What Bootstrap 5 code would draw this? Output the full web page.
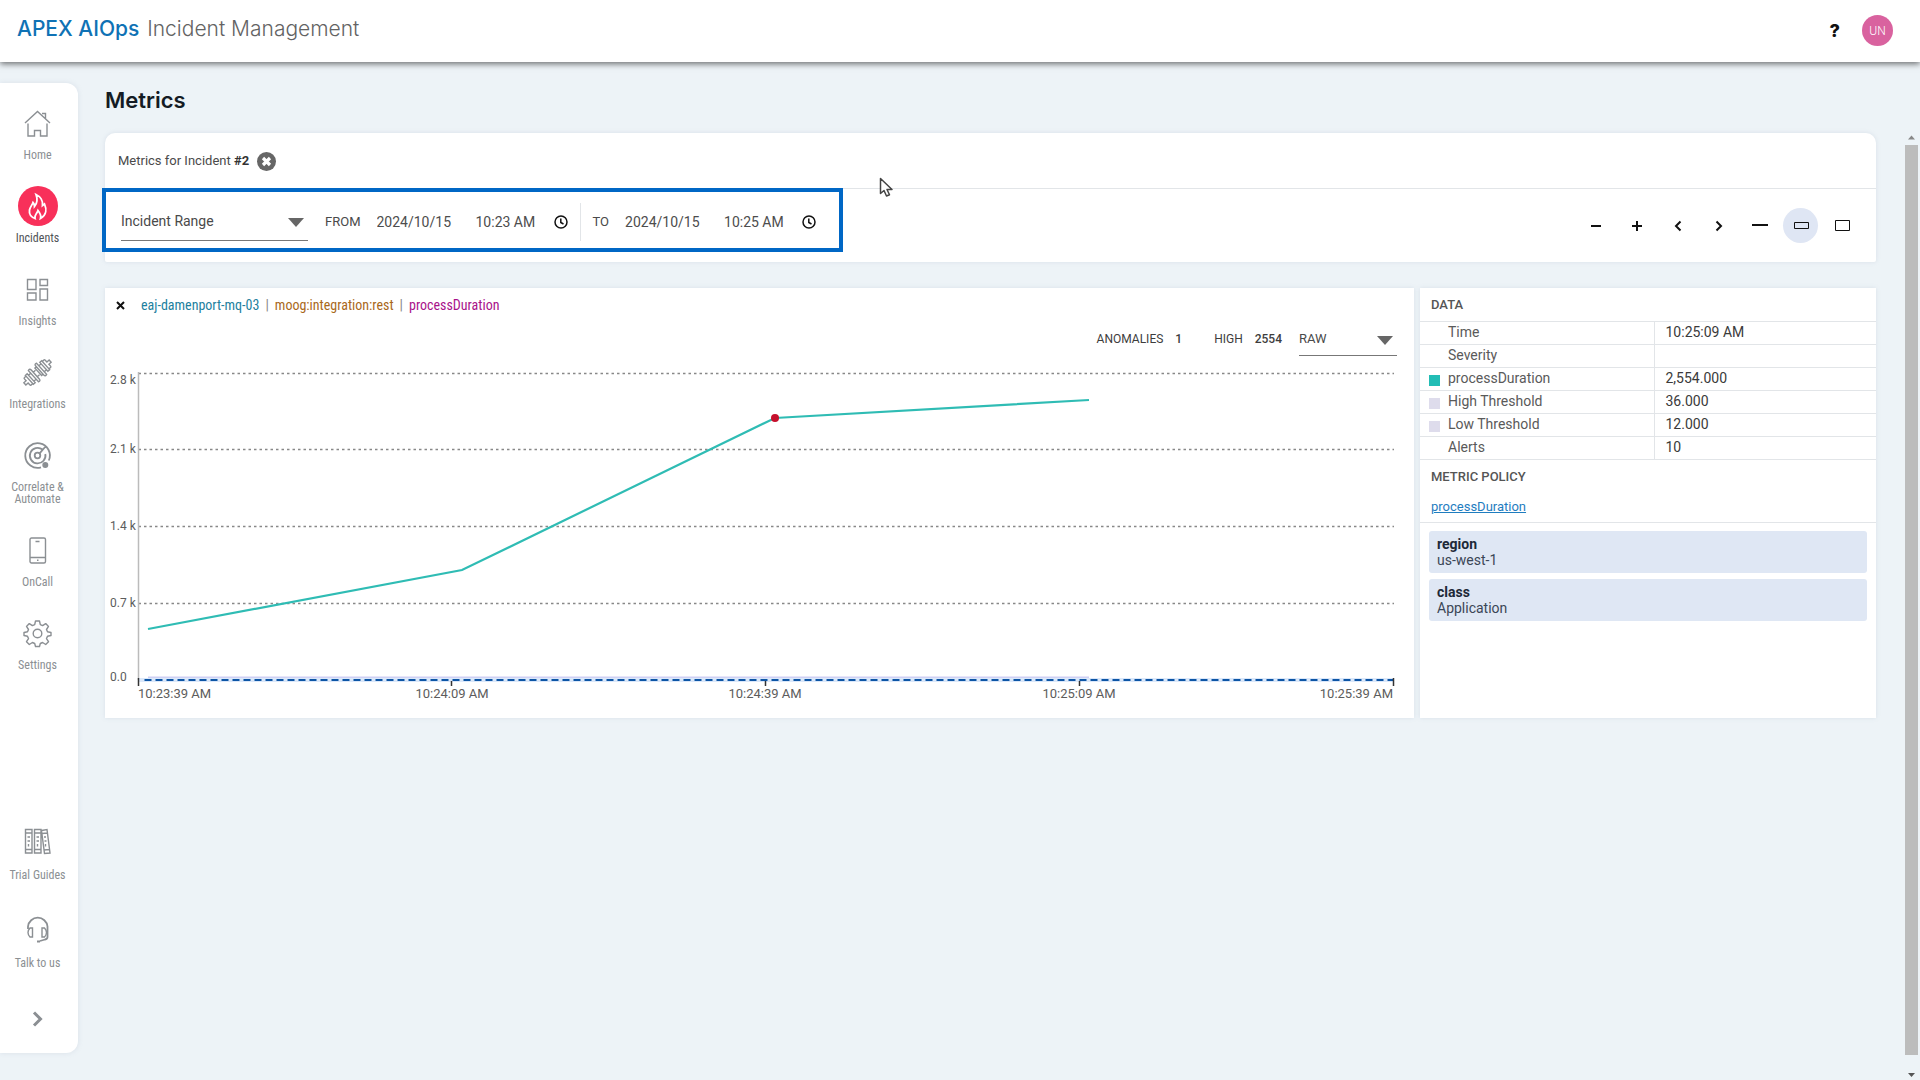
<!DOCTYPE html>
<html lang="en">
<head>
<meta charset="utf-8">
<meta name="viewport" content="width=device-width, initial-scale=1">
<title>Metrics - APEX AIOps Incident Management</title>
<link href="https://cdn.jsdelivr.net/npm/bootstrap@5.3.0/dist/css/bootstrap.min.css" rel="stylesheet">
<style>
:root { --line: #e2e5e8; --ink: #4a4a4a; --blue: #0067c5; }
body { font-family: Roboto, "Open Sans", sans-serif; font-size: 14px; line-height: 16px; color: var(--ink); background: #edf3f7; }
button { font: inherit; color: inherit; background: none; border: 0; padding: 0; }
svg { display: block; }
/* top bar */
.topbar { height: 62px; padding: 0 27px 1px 17px; box-shadow: 0 2px 6px rgba(0,0,0,.55); z-index: 2; }
.brand { font-family: Inter, sans-serif; font-size: 21px; line-height: 24px; font-weight: 300; color: #636363; padding-bottom: 3px; }
.brand b { font-weight: 500; color: #0f72b5; margin-right: 2px; }
.help { font-family: Inter, sans-serif; font-weight: 800; font-size: 18px; line-height: 20px; color: #111; }
.account { gap: 22px; }
.avatar { width: 31px; height: 31px; background: #d9629f; font-size: 12px; font-weight: 300; }
/* side navigation */
.side { width: 78px; margin: 21px 0 27px; padding: 20px 3px 13px 0; border-radius: 0 12px 12px 0; box-shadow: 0 0 5px rgba(160,170,195,.25); }
.side a { color: #8b8f93; font-family: "Roboto Condensed", "Liberation Sans Narrow", Roboto, sans-serif; font-size: 12px; line-height: 12px; text-decoration: none; text-align: center; width: 75px; padding-bottom: 25px; }
.side a.active { color: #4f5357; }
.icobox { width: 40px; height: 40px; margin-bottom: 6px; }
.lower a { padding-bottom: 28px; }
.lower .icobox { margin-bottom: 8px; }
.active .icobox { background: #f8305a; border-radius: 50%; }
.side svg { fill: none; stroke: #8b8f93; stroke-width: 1.4; overflow: visible; }
.side .active svg { stroke: #fff; stroke-width: 1.8; }
.more { height: 43px; }
.side .more svg { stroke-width: 3; }
/* content */
.content { padding: 26px 29px 0 27px; }
h1 { font-family: Inter, sans-serif; font-size: 22px; line-height: 24px; font-weight: 600; color: #141b24; margin: 0 0 21px; }
.panel { background: #fff; box-shadow: 0 0 4px rgba(160,170,195,.25); }
.filters { border-radius: 10px 10px 2px 2px; margin-bottom: 26px; }
.scope { height: 56px; padding: 1px 0 0 13px; border-bottom: 1px solid var(--line); font-size: 13px; }
.scope b { font-weight: 700; color: #333; }
.ranges { min-height: 73px; }
.highlight { margin: -1px 0 0 -3px; border: 4px solid var(--blue); height: 64px; padding: 3px 23px 0 15px; position: relative; }
.pick { position: relative; border-bottom: 1px solid #777; }
.pick select { appearance: none; border: 0; background: none; width: 100%; padding: 0; color: var(--ink); outline: 0; }
.pick svg { position: absolute; right: 4px; top: calc(50% - 3px); pointer-events: none; }
.range-pick { width: 187px; height: 38px; margin-right: 17px; }
.range-pick select { height: 37px; }
.caption { font-size: 13px; }
.highlight input { border: 0; padding: 0; margin: 0; background: none; color: #4d4d4d; outline: 0; }
.in-date { width: 83px; }
.in-time { width: 64px; }
.highlight button { margin-left: 14px; }
.split { width: 1px; height: 38px; background: var(--line); margin: 0 12px; }
.tools { padding-right: 17px; gap: 6px; }
.tools button { width: 35px; height: 35px; border-radius: 50%; }
.tools button.on { background: #dfe6f4; }
.tools svg { fill: none; stroke: #111; stroke-width: 2; }
/* chart */
.cards { gap: 6px; }
.chart-card { flex: 1 1 0; min-width: 0; height: 430px; }
.crumbs { font-family: "Roboto Condensed", "Liberation Sans Narrow", Roboto, sans-serif; font-size: 14px; line-height: 18px; padding: 8px 0 0 11px; }
.crumbs .sep { padding: 0 6px; color: #888; }
.src { color: #1d7f9e; }
.mgr { color: #a9681b; }
.met { color: #a8128a; }
.stats { font-size: 12px; padding: 9px 17px 0 0; height: 42px; color: #3d3d3d; }
.stats b { font-weight: 500; }
.raw-pick { width: 98px; height: 33px; margin-left: 17px; }
.raw-pick select { height: 31px; font-size: 13px; }
.plot { width: 100%; height: auto; font-family: Roboto, sans-serif; font-size: 12px; }
.plot text { fill: #5c5c5c; }
.ticks { font-size: 13px; }
/* data */
.data-card { width: 456px; }
.data-card h2 { font-size: 13px; line-height: 16px; font-weight: 500; color: #555; margin: 0; padding: 9px 11px 0; }
.figures { width: 100%; border-top: 1px solid var(--line); margin-top: 8px; }
.figures tr { border-bottom: 1px solid var(--line); height: 23px; }
.figures th, .figures td { font-weight: 400; padding: 0 0 2px; line-height: 20px; }
.figures th { width: 234px; padding-left: 9px; border-right: 1px solid var(--line); color: #5a5a5a; }
.figures td { padding-left: 11px; color: #3a3a3a; }
.swatch { display: inline-block; width: 11px; height: 11px; margin-right: 8px; vertical-align: -3px; }
.teal { background: #22bdb5; }
.mauve { background: #dedcec; }
.policy { font-size: 13px; padding: 14px 11px 7px; border-bottom: 1px solid var(--line); }
.policy a { color: #1f7dbf; }
.tagbox { background: #dfe7f4; border-radius: 3px; margin: 0 9px 6px; padding: 5px 8px; color: #3b4656; }
.tagbox b { font-weight: 700; color: #1d2938; display: block; }
/* scroll track */
.track { width: 15px; margin-top: 68px; padding: 0 2px 0 0; }
.thumb { background: #bcbcbc; }
.pointer { position: absolute; left: 879px; top: 177px; z-index: 3; }
</style>
</head>
<body class="min-vh-100 d-flex flex-column">
<header class="topbar bg-white d-flex align-items-center justify-content-between position-relative">
  <div class="brand"><b>APEX AIOps</b> Incident Management</div>
  <div class="account d-flex align-items-center">
    <button class="help" type="button" aria-label="Help">?</button>
    <button class="avatar rounded-circle text-white" type="button">UN</button>
  </div>
</header>

<div class="d-flex flex-grow-1">
  <nav class="side bg-white d-flex flex-column align-items-center" aria-label="Main">
    <a href="#" class="d-flex flex-column align-items-center"><span class="icobox d-flex align-items-center justify-content-center">
      <svg width="27" height="27" viewBox="0 0 27 27"><path d="M1 13 13.500 1.500 26 13M18 3.500h3.500V9M4 13.500V26h6.500v-5.500h6V26H23V13.500"/></svg></span>Home</a>
    <a href="#" class="active d-flex flex-column align-items-center"><span class="icobox d-flex align-items-center justify-content-center">
      <svg width="20" height="27" viewBox="0 0 20 27"><path d="M7 25.500C3 24 1 20.500 1.500 17 2 14 4 12.500 5 9.500c1 1 1.500 2.500 1.500 4C9 10.500 9.500 5.500 8 1.500c4.500 2 7 6.500 6.500 11l2-1.500c2 4.500 2.500 11-4 14.500 1-3.500-.5-5.500-2.500-8-1 3.500-4 4.500-3 8Z"/></svg></span>Incidents</a>
    <a href="#" class="d-flex flex-column align-items-center"><span class="icobox d-flex align-items-center justify-content-center">
      <svg width="23" height="23" viewBox="0 0 23 23"><path d="M1.500 1.500h8.500v10H1.500zM14 1.500h7.500v6H14zM1.500 15H10v7H1.500zM14 11h7.500v11H14z"/></svg></span>Insights</a>
    <a href="#" class="d-flex flex-column align-items-center"><span class="icobox d-flex align-items-center justify-content-center">
      <svg width="27" height="27" viewBox="-13.500 -13.500 27 27"><g transform="rotate(-42)"><path d="M-17-1.500h3v-2.500q0-1 1-1h2v10h-2q-1 0-1-1V1.500h-3zM-11-6h2.500v12H-11zM-8.500-4h3v8h-3M-5.500-7.500q2.500-1 2.500 1.500V6q0 2.500-2.500 1.500zM-3-3h3M-3 3h3M17-1.500h-3v-2.500q0-1-1-1h-2v10h2q1 0 1-1V1.500h3zM11-6H8.500v12H11zM8.500-4h-3v8h3M5.500-7.500Q3-8.500 3-6V6q0 2.500 2.500 1.500zM3-5H1V5h2"/></g></svg></span>Integrations</a>
    <a href="#" class="d-flex flex-column align-items-center"><span class="icobox d-flex align-items-center justify-content-center">
      <svg width="27" height="27" viewBox="0 0 27 27"><g stroke-width="1.800"><path d="M17 25.300A12.300 12.300 0 1 1 24.800 18.500M18.500 7.500A7.800 7.800 0 1 0 21.300 12M15.200 11.800 21.500 4.500"/><circle cx="13.500" cy="13.500" r="2.800"/></g><circle cx="21.300" cy="23" r="2.300" fill="#8b8f93"/></svg></span>Correlate &amp;<br>Automate</a>
    <a href="#" class="d-flex flex-column align-items-center"><span class="icobox d-flex align-items-center justify-content-center">
      <svg width="17" height="27" viewBox="0 0 17 27"><rect x="1" y="1" width="15.500" height="25" rx="1.500"/><path d="M1 20.500h15.500M6.500 4.500h4M8 23.300h1.500"/></svg></span>OnCall</a>
    <a href="#" class="d-flex flex-column align-items-center"><span class="icobox d-flex align-items-center justify-content-center">
      <svg width="27" height="27" viewBox="-13.500 -13.500 27 27"><circle r="4.300"/><path d="M-2-12.500h4l.8 3.600 2.300 1 3.100-2 2.800 2.800-2 3.100 1 2.200 3.500.8v3l-3.500.8-1 2.300 2 3.100-2.800 2.800-3.100-2-2.300 1-.8 3h-4l-.8-3-2.300-1-3.100 2-2.800-2.800 2-3.100-1-2.300-3.500-.8v-3l3.500-.8 1-2.200-2-3.100 2.800-2.800 3.100 2 2.300-1Z" stroke-linejoin="round"/></svg></span>Settings</a>
    <div class="lower mt-auto d-flex flex-column align-items-center">
      <a href="#" class="d-flex flex-column align-items-center"><span class="icobox d-flex align-items-center justify-content-center">
        <svg width="27" height="27" viewBox="0 0 27 27"><path d="M1.500 1.500H8V25H1.500zM10.500 1.500H17V25h-6.500zM17.500 2.500l5.500-1L26 25l-5.500.5ZM1.500 5H8M1.500 21.500H8M10.500 5H17M10.500 21.500H17M18 5.500l5.500-.5M20 22l5.500-.5M3.500 9h2.500M3.500 13h2.500M4.500 16v2.500M12.500 9h2.500M12.500 13h2.500M13.500 16v2.500M20 9h2M20.500 13h2M21.500 16v2.500"/></svg></span>Trial Guides</a>
      <a href="#" class="d-flex flex-column align-items-center"><span class="icobox d-flex align-items-center justify-content-center">
        <svg width="23" height="28" viewBox="0 0 23 28"><path d="M2 14v-2.500a9.800 9.800 0 0 1 19.500 0V22q0 2-2.500 2.500l-5 1.500M11 26.500h3" stroke-width="1.800"/><path d="M6.500 13v9H4Q2 20 2 17.500T4 13zM16 13v9h2.500q2-2 2-4.500t-2-4.500z"/></svg></span>Talk to us</a>
      <button class="more d-flex align-items-center" type="button" aria-label="Expand menu"><svg width="11" height="16" viewBox="0 0 11 16"><path d="m2 1.500 6.500 6.500L2 14.500"/></svg></button>
    </div>
  </nav>

  <main class="content flex-grow-1">
    <h1>Metrics</h1>
    <section class="panel filters">
      <div class="scope d-flex align-items-center gap-2">
        <span>Metrics for Incident <b>#2</b></span>
        <button type="button" aria-label="Clear incident"><svg width="19" height="19" viewBox="0 0 19 19"><circle cx="9.500" cy="9.500" r="9.500" fill="#666"/><path d="m6 6 7 7M13 6l-7 7" stroke="#fff" stroke-width="3.200"/></svg></button>
      </div>
      <div class="ranges d-flex justify-content-between align-items-start">
        <div class="highlight d-flex align-items-center">
          <div class="pick range-pick"><select aria-label="Range"><option>Incident Range</option></select><svg width="16" height="9" viewBox="0 0 16 9"><path d="M0 0h16L8 9z" fill="#666"/></svg></div>
          <label class="caption me-3" for="d1">FROM</label>
          <input class="in-date" id="d1" value="2024/10/15">
          <input class="in-time ms-3" aria-label="From time" value="10:23 AM">
          <button type="button" aria-label="Pick from time"><svg width="14" height="14" viewBox="0 0 14 14" fill="none" stroke="#111" stroke-width="1.500"><circle cx="7" cy="7" r="6"/><path d="M6.800 3.500V7.500L9.500 9"/></svg></button>
          <span class="split"></span>
          <label class="caption me-3" for="d2">TO</label>
          <input class="in-date" id="d2" value="2024/10/15">
          <input class="in-time ms-3" aria-label="To time" value="10:25 AM">
          <button type="button" aria-label="Pick to time"><svg width="14" height="14" viewBox="0 0 14 14" fill="none" stroke="#111" stroke-width="1.500"><circle cx="7" cy="7" r="6"/><path d="M6.800 3.500V7.500L9.500 9"/></svg></button>
        </div>
        <div class="tools d-flex align-self-center">
          <button class="d-flex align-items-center justify-content-center" type="button" aria-label="Zoom out"><svg width="16" height="16" viewBox="0 0 16 16"><path d="M3 8h10"/></svg></button>
          <button class="d-flex align-items-center justify-content-center" type="button" aria-label="Zoom in"><svg width="16" height="16" viewBox="0 0 16 16"><path d="M3 8h10M8 3v10"/></svg></button>
          <button class="d-flex align-items-center justify-content-center" type="button" aria-label="Earlier"><svg width="16" height="16" viewBox="0 0 16 16"><path d="M10.500 3.500 6 8l4.500 4.500"/></svg></button>
          <button class="d-flex align-items-center justify-content-center" type="button" aria-label="Later"><svg width="16" height="16" viewBox="0 0 16 16"><path d="M5.500 3.500 10 8l-4.500 4.500"/></svg></button>
          <button class="d-flex align-items-center justify-content-center" type="button" aria-label="Small charts"><svg width="16" height="16" viewBox="0 0 16 16"><path d="M0 7h16"/></svg></button>
          <button class="on d-flex align-items-center justify-content-center" type="button" aria-label="Medium charts"><svg width="16" height="16" viewBox="0 0 16 16"><path d="M1.500 4.500h14v6h-14z" stroke-width="1"/></svg></button>
          <button class="d-flex align-items-center justify-content-center" type="button" aria-label="Large charts"><svg width="16" height="16" viewBox="0 0 16 16"><path d="M1.500 2.500h14v10h-14z" stroke-width="1"/></svg></button>
        </div>
      </div>
    </section>

    <div class="cards d-flex">
      <section class="panel chart-card">
        <div class="crumbs d-flex align-items-center">
          <button class="me-3" type="button" aria-label="Remove metric"><svg width="9" height="9" viewBox="0 0 9 9"><path d="m1 1 7 7M8 1 1 8" stroke="#111" stroke-width="2"/></svg></button>
          <span class="src">eaj-damenport-mq-03</span><span class="sep">|</span><span class="mgr">moog:integration:rest</span><span class="sep">|</span><span class="met">processDuration</span>
        </div>
        <div class="stats d-flex justify-content-end">
          <div class="pt-2">ANOMALIES<b class="ms-2 ps-1">1</b></div>
          <div class="pt-2 ms-4 ps-2">HIGH<b class="ms-2 ps-1">2554</b></div>
          <div class="pick raw-pick"><select aria-label="Resolution"><option>RAW</option></select><svg width="16" height="9" viewBox="0 0 16 9"><path d="M0 0h16L8 9z" fill="#666"/></svg></div>
        </div>
        <svg class="plot" viewBox="0 0 1309 350" role="img" aria-label="processDuration over time">
          <g stroke="#888" stroke-width="1.500" stroke-dasharray="2.500 3"><path d="M33.500 17.500H1289M33.500 93.500H1289M33.500 170.500H1289M33.500 247.500H1289"/></g>
          <path d="M33.500 16v308" stroke="#bbb" stroke-width="1.500"/>
          <path d="M43 321.500H984" stroke="#cfd0f4" stroke-width="2"/>
          <path d="M33.500 324H1289" stroke="#dbe8fa" stroke-width="4"/>
          <path d="M39.500 324H1289" stroke="#0d55a5" stroke-width="2.200" stroke-dasharray="7 4"/>
          <path d="M33.500 322v8M346.500 325v5M660.500 325v5M974.500 325v5M1288.500 322v8" stroke="#333" stroke-width="1.500" fill="none"/>
          <path d="m43 273 314-59 313-152 314-18" fill="none" stroke="#2fbcb4" stroke-width="2.200"/>
          <circle cx="670" cy="62" r="4" fill="#c5102c"/>
          <text x="5" y="28">2.8 k</text><text x="5" y="97">2.1 k</text><text x="5" y="174">1.4 k</text><text x="5" y="251">0.7 k</text><text x="5" y="325">0.0</text>
          <g class="ticks"><text x="33" y="342">10:23:39 AM</text>
          <g text-anchor="middle"><text x="347" y="342">10:24:09 AM</text><text x="660" y="342">10:24:39 AM</text><text x="974" y="342">10:25:09 AM</text></g>
          <text x="1288" y="342" text-anchor="end">10:25:39 AM</text></g>
        </svg>
      </section>
      <aside class="panel data-card">
        <h2>DATA</h2>
        <table class="figures">
          <tr><th scope="row"><span class="swatch"></span>Time</th><td>10:25:09 AM</td></tr>
          <tr><th scope="row"><span class="swatch"></span>Severity</th><td></td></tr>
          <tr><th scope="row"><span class="swatch teal"></span>processDuration</th><td>2,554.000</td></tr>
          <tr><th scope="row"><span class="swatch mauve"></span>High Threshold</th><td>36.000</td></tr>
          <tr><th scope="row"><span class="swatch mauve"></span>Low Threshold</th><td>12.000</td></tr>
          <tr><th scope="row"><span class="swatch"></span>Alerts</th><td>10</td></tr>
        </table>
        <h2>METRIC POLICY</h2>
        <div class="policy mb-2"><a href="#">processDuration</a></div>
        <div class="tagbox"><b>region</b>us-west-1</div>
        <div class="tagbox"><b>class</b>Application</div>
      </aside>
    </div>
  </main>

  <div class="track d-flex flex-column align-items-center" aria-hidden="true">
    <svg width="13" height="15" viewBox="0 0 13 15"><path d="M3 9.500h7L6.500 5.500z" fill="#888"/></svg>
    <div class="thumb w-100 flex-grow-1"></div>
    <svg width="13" height="25" viewBox="0 0 13 25"><path d="M3 18h7l-3.500 4z" fill="#555"/></svg>
  </div>
</div>

<svg class="pointer" width="15" height="21" viewBox="0 0 15 21" aria-hidden="true"><path d="M1.500 1.500v15l3.500-3 2.500 5.500 3-1.300-2.500-5.200h5z" fill="#fff" stroke="#444" stroke-width="1.500" stroke-linejoin="round"/></svg>
<script src="https://cdn.jsdelivr.net/npm/bootstrap@5.3.0/dist/js/bootstrap.bundle.min.js"></script>
</body>
</html>
